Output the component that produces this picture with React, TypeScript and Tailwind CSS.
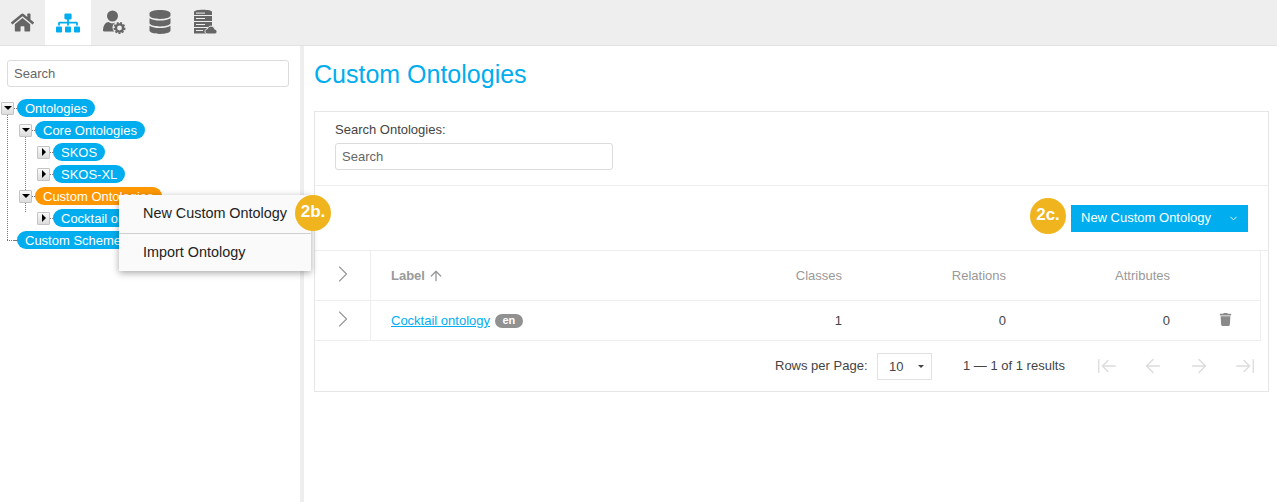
import React from "react";
import { FaHome, FaSitemap, FaDatabase, FaTrash } from "react-icons/fa";
import { ArrowLeft, ArrowLeftToLine, ArrowRight, ArrowRightToLine, ArrowUp, ChevronDown, ChevronRight } from "lucide-react";

function UserCog() {
  return (
    <svg width="24" height="24" viewBox="0 0 24 24" fill="#666" className="-mt-[1px]">
      <circle cx="10.500" cy="6" r="5.500" />
      <path d="M1 21c0-6 3-9 5.500-9 1.200 1 2.500 1.300 4 1.300 1.300 0 2-.2 3-.7-2 1.500-3 3-3 5 0 1.600.7 3 1.800 4H3c-1.300 0-2-.4-2-1.100z" />
      <circle cx="17.500" cy="18" r="3.600" fill="none" stroke="#666" strokeWidth="2.400" />
      <circle cx="17.500" cy="18" r="5.200" fill="none" stroke="#666" strokeWidth="1.600" strokeDasharray="2 1.500" />
    </svg>
  );
}

function ServerCloud() {
  return (
    <svg width="26" height="26" viewBox="0 0 26 26" fill="#666" className="ml-[2px] -mt-[2px]">
      <path d="M1 3C1 1.700 5 .8 10 .8s9 .9 9 2.200v3H1z" />
      <rect x="1" y="7" width="18" height="5" />
      <rect x="1" y="13" width="18" height="5" />
      <rect x="1" y="19" width="18" height="5.500" />
      <rect x="3" y="3.600" width="9" height="1" fill="#eee" />
      <rect x="3" y="9" width="9" height="1" fill="#eee" />
      <rect x="3" y="15" width="9" height="1" fill="#eee" />
      <rect x="3" y="21" width="7" height="1" fill="#eee" />
      <path d="M15 25c-1.800 0-3-1.100-3-2.600 0-1.300 1-2.400 2.400-2.500.5-1.700 1.900-2.800 3.600-2.800 1.900 0 3.400 1.300 3.700 3.100 1.400.1 2.300 1.200 2.300 2.400 0 1.400-1 2.400-2.400 2.400z" stroke="#eee" strokeWidth="1" />
    </svg>
  );
}

function Toggle({ open }: { open: boolean }) {
  return (
    <span className="relative z-10 flex h-[13px] w-[13px] shrink-0 items-center justify-center rounded-[1px] border border-[#c4c4c4] bg-gradient-to-b from-[#fafafa] to-[#dcdcdc]">
      {open ? (
        <span className="h-0 w-0 border-x-[4px] border-t-[4px] border-x-transparent border-t-black" />
      ) : (
        <span className="h-0 w-0 border-y-[4px] border-l-[4px] border-y-transparent border-l-black" />
      )}
    </span>
  );
}

function Row({
  label,
  toggle,
  orange,
}: {
  label: string;
  toggle?: "open" | "closed";
  orange?: boolean;
}) {
  return (
    <div className="flex h-[22px] items-center">
      {toggle ? <Toggle open={toggle === "open"} /> : <span className="w-[13px] shrink-0" />}
      <span className="w-[3px] shrink-0 border-t border-dotted border-[#777]" />
      <span
        className={`flex h-[18px] items-center whitespace-nowrap rounded-full px-2 text-[13px] leading-none text-white ${
          orange ? "bg-[#ff9800]" : "bg-[#00aeef]"
        }`}
      >
        {label}
      </span>
    </div>
  );
}

function Branch({ children, line }: { children: React.ReactNode; line: string }) {
  return (
    <div className="relative pl-[18px]">
      <span className={`absolute left-[6px] top-[-5px] border-l border-dotted border-[#777] ${line}`} />
      {children}
    </div>
  );
}

const inputCls =
  "h-[27px] rounded-[3px] border border-[#dcdcdc] bg-white px-[6px] text-[13px] text-[#666] placeholder:text-[#666] outline-none";

function Badge({ text, className }: { text: string; className?: string }) {
  return (
    <span className={`flex h-[36px] w-[36px] items-center justify-center rounded-full bg-[#f0b41e] pb-[3px] text-[17px] font-bold text-white ${className ?? ""}`}>
      {text}
    </span>
  );
}

const tabs = [
  { icon: <FaHome size={23} color="#666" className="-ml-[1px]" />, w: "w-[45px]" },
  { icon: <FaSitemap size={24} color="#00aeef" className="-ml-[1px]" />, w: "w-[46px]", active: true },
  { icon: <UserCog />, w: "w-[46px]" },
  { icon: <FaDatabase size={24} color="#666" className="-mt-[1px]" />, w: "w-[45px]" },
  { icon: <ServerCloud />, w: "w-[46px]" },
];

const cols = "grid-cols-[56px_328px_164px_164px_164px_1fr]";

export default function App() {
  return (
    <div className="flex h-[502px] w-[1277px] flex-col overflow-hidden bg-white font-['Liberation_Sans',Arial,sans-serif] text-[13px] text-[#444]">
      <header className="flex h-[46px] shrink-0 border-b border-[#e2e2e2] bg-[#eeeeee]">
        {tabs.map((t, i) => (
          <div
            key={i}
            className={`flex h-[45px] items-center justify-center ${t.w} ${t.active ? "bg-white" : ""}`}
          >
            {t.icon}
          </div>
        ))}
      </header>
      <div className="flex min-h-0 flex-1">
        <aside className="relative w-[304px] shrink-0 border-r-[4px] border-[#eeeeee] pl-[1px] pt-[14px]">
          <div className="px-[6px]">
            <input className={`${inputCls} w-[282px]`} placeholder="Search" readOnly />
          </div>
          <div className="relative mt-[10px]">
            <span className="absolute left-[6px] top-[17px] h-[126px] border-l border-dotted border-[#777]" />
            <span className="absolute left-[6px] top-[143px] w-[11px] border-t border-dotted border-[#777]" />
            <Row label="Ontologies" toggle="open" />
            <Branch line="h-0">
              <div className="relative">
                <span className="absolute left-[6px] top-[17px] h-[60px] border-l border-dotted border-[#777]" />
                <Row label="Core Ontologies" toggle="open" />
                <Branch line="h-[44px]">
                  <Row label="SKOS" toggle="closed" />
                  <Row label="SKOS-XL" toggle="closed" />
                </Branch>
                <Row label="Custom Ontologies" toggle="open" orange />
                <Branch line="h-[10px]">
                  <Row label="Cocktail ontology" toggle="closed" />
                </Branch>
              </div>
            </Branch>
            <Row label="Custom Schemes" />
          </div>
          <div className="absolute left-[119px] top-[149px] z-20 w-[192px] bg-[#fafafa] text-[14.4px] text-[#222] shadow-[0_2px_7px_rgba(0,0,0,0.35)]">
            <div className="flex h-[38px] items-center pl-[24px]">New Custom Ontology</div>
            <div className="flex h-[38px] items-center border-t border-[#d0d0d0] pl-[24px]">Import Ontology</div>
            <div className="absolute left-[176px] top-0 flex h-[36px] items-center">
              <Badge text="2b." />
            </div>
          </div>
        </aside>
        <main className="min-w-0 flex-1 pl-[10px] pr-[8px]">
          <h1 className="flex h-[65px] items-center pb-[7px] text-[25px] text-[#00aeef]">Custom Ontologies</h1>
          <section className="border border-[#e6e6e6]">
            <div className="h-[74px] border-b border-[#eeeeee] px-[20px] pt-[10px]">
              <div className="mb-[5px] leading-[16px]">Search Ontologies:</div>
              <input className={`${inputCls} w-[278px]`} placeholder="Search" readOnly />
            </div>
            <div className="flex h-[65px] items-center justify-end gap-[5px] border-b border-[#eeeeee] pr-[20px]">
              <Badge text="2c." className="-mt-[4px]" />
              <div className="flex h-[27px] w-[177px] items-center bg-[#00aeef] pl-[10px] text-[13px] text-white">
                <span className="flex-1">New Custom Ontology</span>
                <ChevronDown size={11} className="mr-[9px]" />
              </div>
            </div>
            <div className="mr-[7px] border-r border-[#eeeeee]">
              <div className={`grid h-[50px] ${cols} items-center border-b border-[#eeeeee] text-[#999]`}>
                <div className="flex h-full items-center justify-center border-r border-[#eeeeee] pb-[4px]">
                  <ChevronRight size={28} strokeWidth={1} color="#999" />
                </div>
                <div className="flex items-center gap-[3px] pl-[20px] font-bold">
                  Label <ArrowUp size={16} strokeWidth={2} />
                </div>
                <div className="pr-[21px] text-right">Classes</div>
                <div className="pr-[21px] text-right">Relations</div>
                <div className="pr-[21px] text-right">Attributes</div>
                <div />
              </div>
              <div className={`grid h-[40px] ${cols} items-center border-b border-[#eeeeee]`}>
                <div className="flex h-full items-center justify-center border-r border-[#eeeeee] pb-[3px]">
                  <ChevronRight size={28} strokeWidth={1} color="#999" />
                </div>
                <div className="flex items-center gap-[5px] pl-[20px]">
                  <span className="text-[#00aeef] underline">Cocktail ontology</span>
                  <span className="flex h-[14px] items-center rounded-full bg-[#919191] px-[7.5px] text-[11px] font-bold leading-none text-white">en</span>
                </div>
                <div className="pr-[21px] text-right">1</div>
                <div className="pr-[21px] text-right">0</div>
                <div className="pr-[21px] text-right">0</div>
                <div className="flex justify-center pb-[2px] pr-[1px]">
                  <FaTrash size={13} color="#8a8a8a" />
                </div>
              </div>
            </div>
            <div className="flex h-[50px] items-center pl-[460px]">
              <span className="w-[102px]">Rows per Page:</span>
              <span className="flex h-[27px] w-[55px] items-center justify-between border border-[#e2e2e2] pl-[11px] pr-[7px] pt-[1px]">
                10
                <span className="h-0 w-0 border-x-[3px] border-t-[3px] border-x-transparent border-t-[#444]" />
              </span>
              <span className="ml-[31px] w-[101px] whitespace-nowrap">1 — 1 of 1 results</span>
              <span className="ml-[32px] flex gap-[24px] text-[#dcdcdc]">
                <ArrowLeftToLine size={22} strokeWidth={1.500} />
                <ArrowLeft size={22} strokeWidth={1.500} />
                <ArrowRight size={22} strokeWidth={1.500} />
                <ArrowRightToLine size={22} strokeWidth={1.500} />
              </span>
            </div>
          </section>
        </main>
      </div>
    </div>
  );
}
